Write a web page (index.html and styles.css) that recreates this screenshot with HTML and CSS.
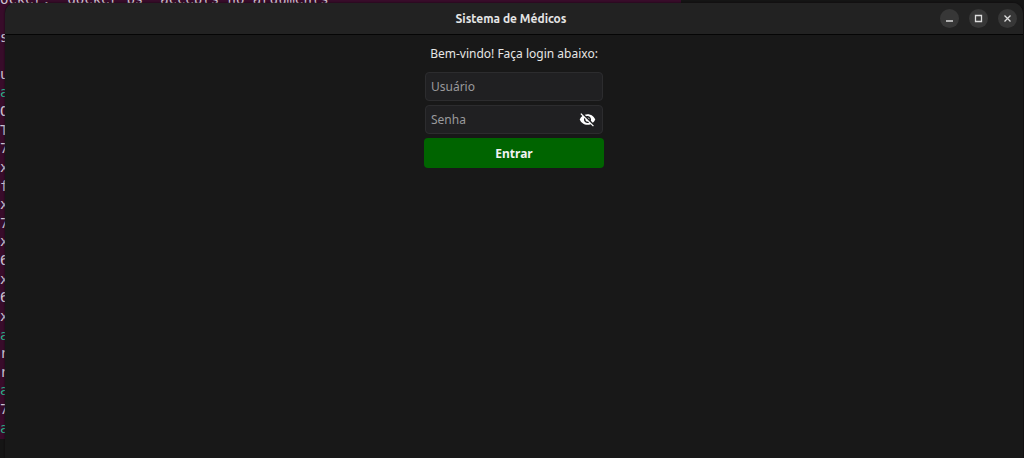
FILE: index.html
```html
<!DOCTYPE html>
<html lang="pt-BR">
<head>
<meta charset="utf-8">
<title>Sistema de Médicos</title>
<link rel="stylesheet" href="styles.css">
</head>
<body>
<div class="desktop">
  <div class="terminal" aria-hidden="true">
    <span>ocker: 'docker ps' accepts no arguments</span>
    <span></span>
    <span>s</span>
    <span></span>
    <span>u</span>
    <span class="prompt">a</span>
    <span>O</span>
    <span>T</span>
    <span>7</span>
    <span>x</span>
    <span>f</span>
    <span>x</span>
    <span>7</span>
    <span>x</span>
    <span>6</span>
    <span>x</span>
    <span>6</span>
    <span>x</span>
    <span class="prompt">a</span>
    <span>r</span>
    <span>r</span>
    <span class="prompt">a</span>
    <span>7</span>
    <span class="prompt">a</span>
  </div>
  <main class="window">
    <header class="titlebar">
      <h1 class="title">Sistema de Médicos</h1>
      <div class="controls">
        <button class="control" type="button" aria-label="Minimizar">
          <svg viewBox="0 0 19 19"><path d="M6 12h7" /></svg>
        </button>
        <button class="control" type="button" aria-label="Maximizar">
          <svg viewBox="0 0 19 19"><path d="M6.5 6.5h6v6h-6z" /></svg>
        </button>
        <button class="control" type="button" aria-label="Fechar">
          <svg viewBox="0 0 19 19"><path d="M6.5 6.5l6 6M12.5 6.5l-6 6" /></svg>
        </button>
      </div>
    </header>
    <form class="login">
      <p class="welcome">Bem-vindo! Faça login abaixo:</p>
      <div class="field">
        <input type="text" placeholder="Usuário" aria-label="Usuário">
      </div>
      <div class="field">
        <input type="password" placeholder="Senha" aria-label="Senha">
        <button class="reveal" type="button" aria-label="Mostrar senha">
          <svg viewBox="0 0 24 24"><path d="M12 7c2.76 0 5 2.24 5 5 0 .65-.13 1.26-.36 1.83l2.92 2.92c1.51-1.26 2.7-2.89 3.43-4.75-1.73-4.39-6-7.5-11-7.5-1.4 0-2.74.25-3.98.7l2.16 2.16C10.74 7.13 11.35 7 12 7zM2 4.27l2.28 2.28.46.46C3.08 8.3 1.78 10.02 1 12c1.73 4.39 6 7.5 11 7.5 1.55 0 3.03-.3 4.38-.84l.42.42L19.73 22 21 20.73 3.27 3 2 4.27zM7.53 9.8l1.55 1.55c-.05.21-.08.43-.08.65 0 1.66 1.34 3 3 3 .22 0 .44-.03.65-.08l1.55 1.55c-.67.33-1.41.53-2.2.53-2.76 0-5-2.24-5-5 0-.79.2-1.53.53-2.2zm4.31-.78l3.15 3.15.02-.16c0-1.66-1.34-3-3-3l-.17.01z"/></svg>
        </button>
      </div>
      <button class="submit" type="submit">Entrar</button>
    </form>
  </main>
</div>
</body>
</html>
```
FILE: styles.css
```css
* {
  box-sizing: border-box;
}

body {
  margin: 0;
  background: #151515;
  color: #e6e6e6;
  font-family: "Noto Sans", sans-serif;
  font-size: 12px;
}

.desktop {
  position: relative;
  height: 100vh;
  overflow: hidden;
}

.terminal {
  position: absolute;
  top: -10px;
  bottom: 19px;
  left: 0;
  width: 681px;
  padding-bottom: 2px;
  display: grid;
  grid-auto-rows: 1fr;
  align-items: center;
  background: #380c2a;
  color: #d0c6d0;
  font: 14px/18px "DejaVu Sans Mono", monospace;
  white-space: pre;
}

.prompt {
  color: #2bb587;
}

.window {
  position: absolute;
  inset: 3px 1px 0 5px;
  display: flex;
  flex-direction: column;
  overflow: hidden;
  background: #181818;
  border-radius: 10px 10px 0 0;
  box-shadow: 0 0 2px #0c060a;
}

.titlebar {
  display: grid;
  grid-template-columns: 1fr auto 1fr;
  align-items: center;
  height: 32px;
  padding-right: 6px;
  background: #222222;
  border-bottom: 1px solid #050505;
}

.title {
  grid-column: 2;
  margin: 0;
  font: 600 12px/16px Ubuntu, "Open Sans", sans-serif;
}

.controls {
  display: flex;
  justify-content: flex-end;
  gap: 10px;
}

.control {
  width: 19px;
  height: 19px;
  padding: 0;
  border: 0;
  border-radius: 50%;
  background: #373737;
}

.control svg {
  display: block;
  fill: none;
  stroke: #dddddd;
  stroke-width: 1.3;
}

.login {
  display: flex;
  flex-direction: column;
  gap: 4px;
  width: 180px;
  margin: 0 auto;
  padding-top: 10px;
}

.welcome {
  margin: 0 0 6px;
  line-height: 17px;
  text-align: center;
  white-space: nowrap;
}

.field {
  display: flex;
  align-items: center;
  height: 29px;
  margin: 0 1px;
  padding: 0 6px 0 5px;
  background: #202022;
  border: 1px solid #2c2c2e;
  border-radius: 4px;
}

.field input {
  flex: 1;
  min-width: 0;
  padding: 0;
  border: 0;
  outline: 0;
  background: none;
  color: #e6e6e6;
  font: 12px/17px "Noto Sans", sans-serif;
}

.field input::placeholder {
  color: #9a9a9c;
  opacity: 1;
}

.reveal {
  width: 17px;
  height: 17px;
  padding: 0;
  border: 0;
  background: none;
}

.reveal svg {
  display: block;
  fill: #ffffff;
}

.submit {
  height: 30px;
  padding: 0;
  border: 0;
  border-radius: 4px;
  background: #006400;
  color: #f2f2f2;
  font: bold 12px/17px "Noto Sans", sans-serif;
}
```
